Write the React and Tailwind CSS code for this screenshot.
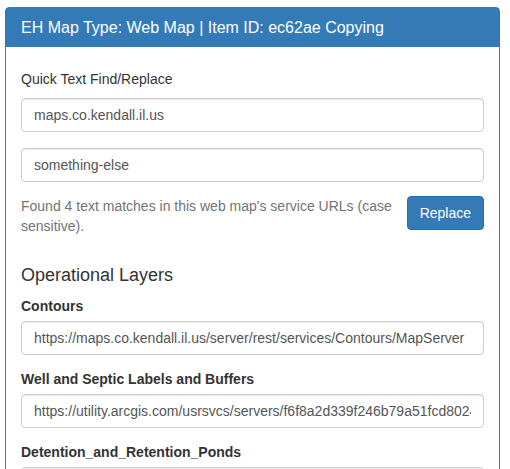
import React from 'react';

const font = { fontFamily: '"Liberation Sans", Arial, sans-serif' };

function Field({ value, className = '' }) {
    return (
        <input
            readOnly
            value={value}
            className={`block w-full h-[34px] px-[12px] py-[6px] text-[14px] leading-[20px] text-[#555] bg-white border border-[#ccc] rounded-[4px] shadow-[inset_0_1px_1px_rgba(0,0,0,0.075)] outline-none ${className}`}
        />
    );
}

function LayerGroup({ name, url }) {
    return (
        <div className="mb-[14px]">
            <div className="text-[14px] leading-[20px] font-bold text-[#333] mb-[5px]">{name}</div>
            <Field value={url} />
        </div>
    );
}

export default function App() {
    return (
        <div className="w-[510px] h-[469px] overflow-hidden bg-white" style={font}>
            <div className="ml-[5px] mt-[7px] w-[495px] border border-[#337ab7] rounded-t-[4px]">
                <div className="h-[39px] bg-[#337ab7] text-white text-[16px] px-[15px] flex items-center">
                    EH Map Type: Web Map | Item ID: ec62ae Copying
                </div>
                <div className="px-[15px] pt-[22px]">
                    <div className="text-[14px] leading-[20px] text-[#333] mb-[9px]">Quick Text Find/Replace</div>
                    <Field value="maps.co.kendall.il.us" />
                    <Field value="something-else" className="mt-[16px]" />
                    <div className="flex items-start gap-[10px] mt-[14px]">
                        <p className="flex-1 text-[14px] leading-[20px] text-[#737373]">
                            Found 4 text matches in this web map's service URLs (case sensitive).
                        </p>
                        <button className="h-[34px] px-[12px] text-[14px] leading-[20px] text-white bg-[#337ab7] border border-[#2e6da4] rounded-[4px]">
                            Replace
                        </button>
                    </div>
                    <h4 className="text-[18px] leading-[20px] text-[#333] mt-[29px] mb-[11px]">Operational Layers</h4>
                    <LayerGroup name="Contours" url="https://maps.co.kendall.il.us/server/rest/services/Contours/MapServer" />
                    <LayerGroup name="Well and Septic Labels and Buffers" url="https://utility.arcgis.com/usrsvcs/servers/f6f8a2d339f246b79a51fcd8024ef35b/rest/services/WellSeptic/MapServer" />
                    <LayerGroup name="Detention_and_Retention_Ponds" url="https://maps.co.kendall.il.us/server/rest/services/Detention_and_Retention_Ponds/MapServer" />
                </div>
            </div>
        </div>
    );
}
